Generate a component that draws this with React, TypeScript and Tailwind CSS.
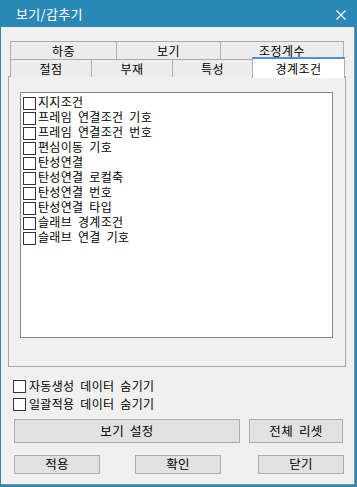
import React from "react";

const font = { fontFamily: '"Noto Sans CJK KR", "Noto Sans", sans-serif' };

function Box() {
  return <span className="inline-block w-[13px] h-[13px] border border-[#333333] bg-white shrink-0" />;
}

const items = [
  "지지조건",
  "프레임 연결조건 기호",
  "프레임 연결조건 번호",
  "편심이동 기호",
  "탄성연결",
  "탄성연결 로컬축",
  "탄성연결 번호",
  "탄성연결 타입",
  "슬래브 경계조건",
  "슬래브 연결 기호",
];

export default function App() {
  return (
    <div className="w-[357px] h-[487px] bg-[#2b88b6] flex flex-col text-black [word-spacing:3px]" style={font}>
      <div className="h-[27px] flex items-center justify-between pl-[16px] pr-[11px] text-white text-[13px]">
        <span className="leading-none tracking-[0.3px]">보기/감추기</span>
        <svg width="10" height="10" viewBox="0 0 10 10" className="mt-[2px]">
          <path d="M0.5 0.5 L9.5 9.5 M9.5 0.5 L0.5 9.5" stroke="white" strokeWidth="1.1" />
        </svg>
      </div>
      <div className="flex-1 ml-[1px] mr-[2px] mb-[2px] bg-[#f0f0f0] border-r border-b border-[#8a8a8a] flex flex-col">
        {/* Tab control */}
        <div className="ml-[7px] mt-[14px] w-[338px] flex flex-col">
          <div className="flex pl-[2px] h-[18px] text-[12px] leading-none tracking-[0.4px]">
            <div className="w-[106px] border border-r-0 border-b-0 border-[#adadad] bg-[#ececec] flex items-center justify-center">하중</div>
            <div className="w-[104px] border border-r-0 border-b-0 border-[#adadad] bg-[#ececec] flex items-center justify-center">보기</div>
            <div className="w-[124px] border border-b-0 border-[#adadad] bg-[#ececec] flex items-center justify-center">조정계수</div>
          </div>
          <div className="flex pl-[2px] h-[18px] text-[12px] leading-none tracking-[0.4px] relative z-10">
            <div className="w-[81px] border border-r-0 border-b-0 border-[#adadad] bg-[#ececec] flex items-center justify-center">절점</div>
            <div className="w-[81px] border border-r-0 border-b-0 border-[#adadad] bg-[#ececec] flex items-center justify-center">부재</div>
            <div className="w-[80px] border border-r-0 border-b-0 border-[#adadad] bg-[#ececec] flex items-center justify-center">특성</div>
            <div className="w-[93px] h-[21px] -mt-[2px] border-x border-[#adadad] border-t-2 border-t-[#4a90e2] bg-white flex items-center justify-center">경계조건</div>
          </div>
          <div className="h-[291px] -mt-px border border-[#a8a8a8] bg-[#f0f0f0] pt-[15px] pl-[11px]">
            <div className="w-[313px] h-[246px] bg-white border border-[#828790] pt-[1px] pl-[2px]">
              {items.map((t) => (
                <div key={t} className="h-[15px] flex items-center gap-[2px] text-[12px] leading-none tracking-[0.3px]">
                  <span className="mt-[5px]"><Box /></span>
                  <span className="whitespace-nowrap">{t}</span>
                </div>
              ))}
            </div>
          </div>
        </div>
        {/* bottom checkboxes */}
        <div className="ml-[12px] mt-[12px] flex flex-col gap-[4px] text-[12px] leading-none tracking-[0.3px]">
          <div className="h-[14px] flex items-center gap-[3px]">
            <Box />
            <span>자동생성 데이터 숨기기</span>
          </div>
          <div className="h-[14px] flex items-center gap-[3px]">
            <Box />
            <span>일괄적용 데이터 숨기기</span>
          </div>
        </div>
        <div className="ml-[13px] mt-[8px] flex gap-[9px] text-[12.5px] leading-none tracking-[0.3px]">
          <div className="w-[226px] h-[24px] bg-[#e1e1e1] border border-[#adadad] flex items-center justify-center">보기 설정</div>
          <div className="w-[94px] h-[24px] bg-[#e1e1e1] border border-[#adadad] flex items-center justify-center">전체 리셋</div>
        </div>
        <div className="ml-[13px] mt-[12px] flex text-[12.5px] leading-none tracking-[0.3px]">
          <div className="w-[86px] h-[19px] bg-[#e1e1e1] border border-[#adadad] flex items-center justify-center">적용</div>
          <div className="w-[86px] h-[19px] ml-[35px] bg-[#e1e1e1] border border-[#adadad] flex items-center justify-center">확인</div>
          <div className="w-[86px] h-[19px] ml-[37px] bg-[#e1e1e1] border border-[#adadad] flex items-center justify-center">닫기</div>
        </div>
      </div>
    </div>
  );
}
